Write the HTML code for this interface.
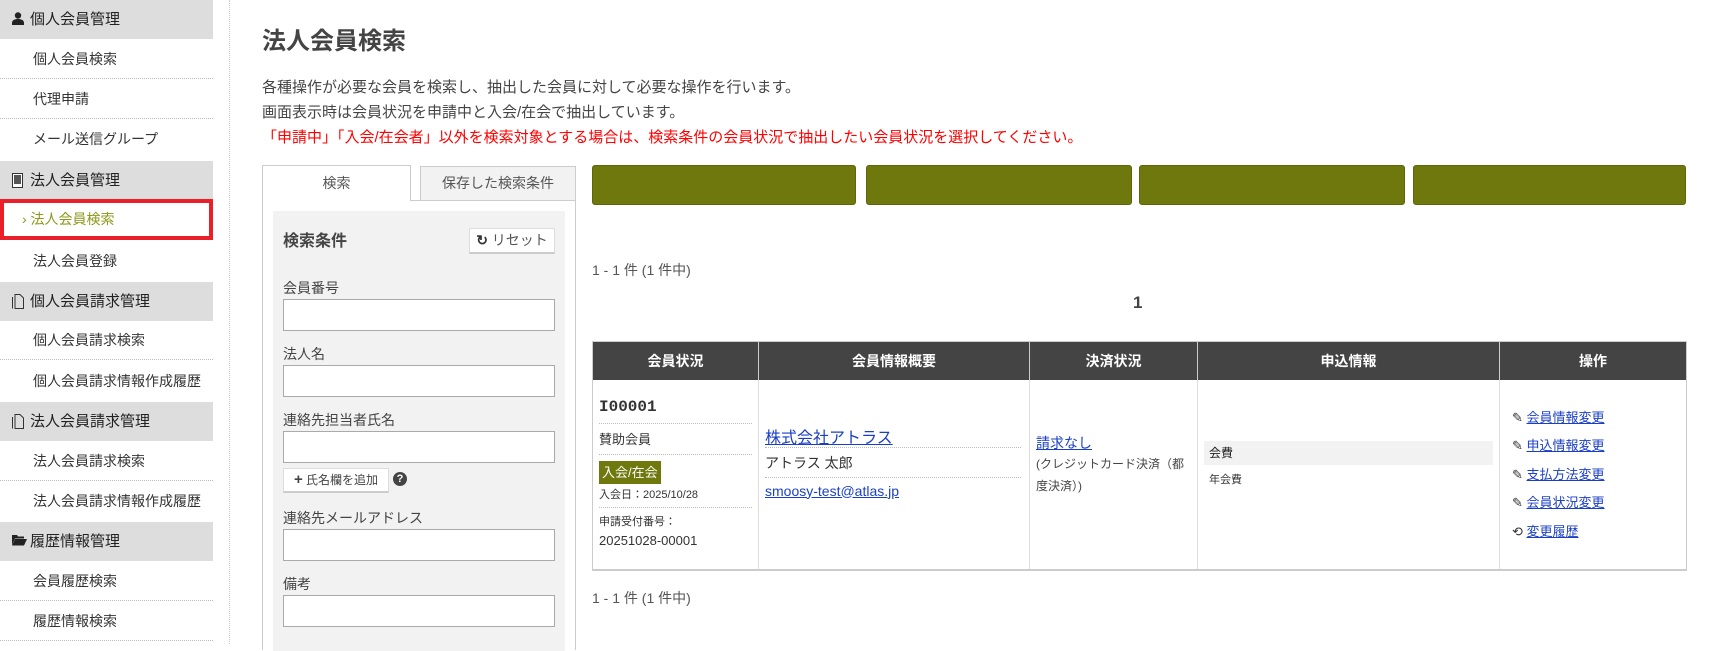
<!DOCTYPE html>
<html><head><meta charset="utf-8"><style>
*{box-sizing:border-box;margin:0;padding:0}
body{width:1719px;height:644px;overflow:hidden;background:#fff;font-family:"Liberation Sans","Noto Sans CJK JP",sans-serif;color:#333;position:relative}
.a{position:absolute}
.side{left:0;top:0;width:213px;height:644px}
.h{position:absolute;left:0;width:213px;height:39px;background:#ddd;font-size:15px;line-height:39px;padding-left:30px;color:#222}
.h svg{position:absolute;left:12px;top:12px}
.it{position:absolute;left:0;width:213px;height:40px;border-bottom:1px dotted #bbb;font-size:14px;line-height:40px;padding-left:33px;color:#333}
.vl{left:229px;top:0;height:644px;border-left:1px dotted #ccc}
.inp{position:absolute;left:283px;width:272px;height:32px;border:1px solid #aaa;background:#fff}
.lbl{position:absolute;left:283px;font-size:14px;color:#444}
.gb{position:absolute;top:165px;height:40px;background:#6e780d;border:1px solid #5d6609;border-radius:3px}
th{background:#444;color:#fff;font-size:14px;font-weight:bold;height:38px;border-right:1px solid #ccc}
td{border-right:1px solid #ddd;vertical-align:top;font-size:13px}
a{color:#1a3fc6}
.dot{border-bottom:1px dotted #bbb}
</style></head><body>
<div class="a side">
<div class="h" style="top:0"><svg width="12" height="13" viewBox="0 0 12 13"><circle cx="6" cy="3.5" r="3.2" fill="#222"/><path d="M0 13v-2c0-3 3-4 6-4s6 1 6 4v2z" fill="#222"/></svg>個人会員管理</div>
<div class="it" style="top:39px">個人会員検索</div>
<div class="it" style="top:79px">代理申請</div>
<div class="it" style="top:119px;border:none">メール送信グループ</div>
<div class="h" style="top:161px"><svg width="11" height="15" viewBox="0 0 11 15"><rect x="0.5" y="0.5" width="10" height="14" fill="#fff" stroke="#333"/><rect x="2" y="2" width="7" height="9" fill="#555"/></svg>法人会員管理</div>
<div class="a" style="left:0;top:199px;width:213px;height:41px;border:4px solid #ea1f27;font-size:14px;line-height:33px;padding-left:18px;color:#8a9918">›&nbsp;法人会員検索</div>
<div class="it" style="top:241px;border:none">法人会員登録</div>
<div class="h" style="top:282px"><svg width="12" height="15" viewBox="0 0 12 15"><path d="M3 .5h5l3.5 3.5v10.5h-8.5zM.5 3v11.5" fill="none" stroke="#333"/></svg>個人会員請求管理</div>
<div class="it" style="top:320px">個人会員請求検索</div>
<div class="it" style="top:361px;border:none">個人会員請求情報作成履歴</div>
<div class="h" style="top:402px"><svg width="12" height="15" viewBox="0 0 12 15"><path d="M3 .5h5l3.5 3.5v10.5h-8.5zM.5 3v11.5" fill="none" stroke="#333"/></svg>法人会員請求管理</div>
<div class="it" style="top:441px">法人会員請求検索</div>
<div class="it" style="top:481px;border:none">法人会員請求情報作成履歴</div>
<div class="h" style="top:522px"><svg width="15" height="12" viewBox="0 0 15 12"><path d="M0 1h5l1 1.5h6v2H3L0 11z" fill="#222"/><path d="M3 5h12l-3 6.5H0z" fill="#222"/></svg>履歴情報管理</div>
<div class="it" style="top:561px">会員履歴検索</div>
<div class="it" style="top:601px">履歴情報検索</div>
</div>
<div class="a vl"></div>

<div class="a" style="left:262px;top:21px;font-size:24px;font-weight:bold;color:#444">法人会員検索</div>
<div class="a" style="left:262px;top:75px;font-size:15px;line-height:25px;color:#444">各種操作が必要な会員を検索し、抽出した会員に対して必要な操作を行います。<br>画面表示時は会員状況を申請中と入会/在会で抽出しています。<br><span style="color:#f00">「申請中」「入会/在会者」以外を検索対象とする場合は、検索条件の会員状況で抽出したい会員状況を選択してください。</span></div>

<div class="a" style="left:262px;top:200px;width:314px;height:450px;border-left:1px solid #ccc;border-right:1px solid #ccc"></div>
<div class="a" style="left:262px;top:165px;width:149px;height:36px;border:1px solid #ccc;border-bottom:none;background:#fff;text-align:center;line-height:35px;font-size:14px;color:#555">検索</div>
<div class="a" style="left:410px;top:200px;width:166px;border-top:1px solid #ccc"></div>
<div class="a" style="left:420px;top:166px;width:156px;height:34px;border:1px solid #ccc;border-bottom:none;background:#f2f2f2;text-align:center;line-height:33px;font-size:14px;color:#555">保存した検索条件</div>
<div class="a" style="left:273px;top:211px;width:292px;height:440px;background:#f2f2f2"></div>
<div class="a" style="left:283px;top:227px;font-size:16px;font-weight:bold;color:#444">検索条件</div>
<div class="a" style="left:469px;top:228px;width:86px;height:26px;background:#fff;border:1px solid #ddd;border-bottom:2px solid #ccc;font-size:14px;line-height:23px;text-align:center;color:#555"><b style="color:#333">↻</b> リセット</div>
<div class="lbl" style="top:278px">会員番号</div><div class="inp" style="top:299px"></div>
<div class="lbl" style="top:344px">法人名</div><div class="inp" style="top:365px"></div>
<div class="lbl" style="top:410px">連絡先担当者氏名</div><div class="inp" style="top:431px"></div>
<div class="a" style="left:283px;top:468px;width:106px;height:25px;background:#fff;border:1px solid #ddd;border-bottom:2px solid #ccc;font-size:12px;line-height:22px;text-align:center;color:#444"><b style="font-size:15px">+</b> 氏名欄を追加</div>
<div class="a" style="left:393px;top:472px;width:14px;height:14px;border-radius:50%;background:#444;color:#fff;font-size:11px;font-weight:bold;text-align:center;line-height:14px">?</div>
<div class="lbl" style="top:508px">連絡先メールアドレス</div><div class="inp" style="top:529px"></div>
<div class="lbl" style="top:574px">備考</div><div class="inp" style="top:595px"></div>

<div class="gb" style="left:592px;width:264px"></div>
<div class="gb" style="left:866px;width:266px"></div>
<div class="gb" style="left:1139px;width:266px"></div>
<div class="gb" style="left:1413px;width:273px"></div>

<div class="a" style="left:592px;top:260px;font-size:14px;color:#555">1 - 1 件 (1 件中)</div>
<div class="a" style="left:1133px;top:293px;font-size:17px;font-weight:bold;color:#444">1</div>

<table class="a" style="left:592px;top:341px;width:1095px;height:230px;border-collapse:collapse;border:1px solid #ccc;border-bottom:2px solid #ccc">
<tr><th style="width:166px">会員状況</th><th style="width:271px">会員情報概要</th><th style="width:168px">決済状況</th><th style="width:302px">申込情報</th><th style="border-right:none">操作</th></tr>
<tr><td style="padding:14px 6px 0 6px">
<div class="dot" style="font-size:16px;font-weight:bold;height:30px;line-height:26px;font-family:'Liberation Mono','Noto Sans CJK JP',monospace;color:#333">I00001</div>
<div class="dot" style="height:31px;line-height:31px">賛助会員</div>
<div style="display:inline-block;margin-top:6px;background:#6e780d;color:#fff;padding:0 3px;height:23px;line-height:23px">入会/在会</div>
<div class="dot" style="font-size:11px;height:24px;line-height:22px">入会日：2025/10/28</div>
<div style="font-size:11px;margin-top:5px">申請受付番号：</div>
<div style="margin-top:4px">20251028-00001</div>
</td>
<td style="padding:44px 8px 0 6px">
<div class="dot" style="font-size:16px;height:24px"><a href="#">株式会社アトラス</a></div>
<div class="dot" style="font-size:14px;height:30px;line-height:30px">アトラス 太郎</div>
<div style="font-size:14px;margin-top:5px"><a href="#">smoosy-test@atlas.jp</a></div>
</td>
<td style="padding:53px 6px 0 6px"><div style="font-size:14px"><a href="#">請求なし</a></div><div style="font-size:12px;line-height:22px;color:#444">(クレジットカード決済（都度決済）)</div></td>
<td style="padding:61px 6px 0 6px"><div style="background:#f2f2f2;height:24px;line-height:24px;padding-left:5px;font-size:12px;color:#222">会費</div><div style="font-size:11px;padding:6px 0 0 5px">年会費</div></td>
<td style="padding:24px 0 0 12px;border-right:none;font-size:13px;line-height:28.5px">
<div>✎ <a href="#">会員情報変更</a></div><div>✎ <a href="#">申込情報変更</a></div><div>✎ <a href="#">支払方法変更</a></div><div>✎ <a href="#">会員状況変更</a></div><div>⟲ <a href="#">変更履歴</a></div>
</td></tr></table>

<div class="a" style="left:592px;top:588px;font-size:14px;color:#555">1 - 1 件 (1 件中)</div>
</body></html>
